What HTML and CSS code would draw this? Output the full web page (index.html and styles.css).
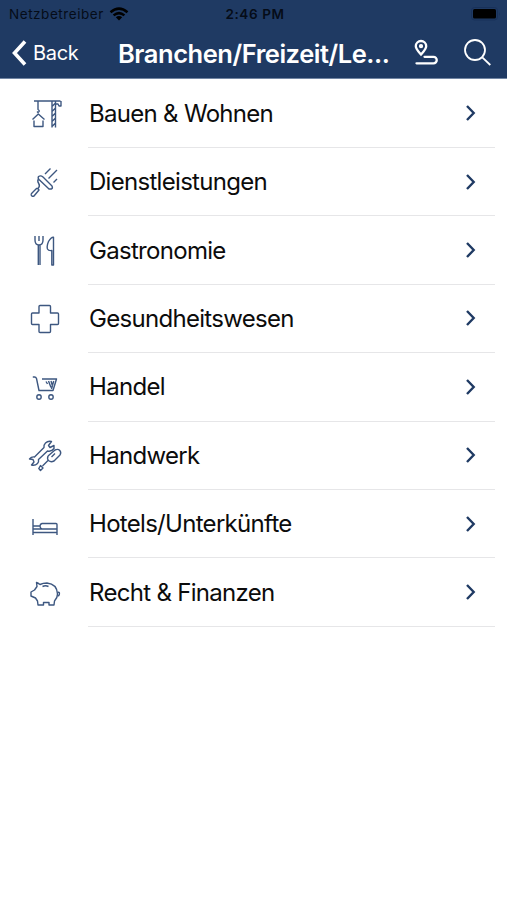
FILE: index.html
```html
<!DOCTYPE html>
<html lang="de">
<head>
    <meta charset="utf-8">
    <title>Branchen</title>
    <link rel="stylesheet" href="styles.css">
</head>

<body>
    <header class="header">
        <div class="status">
            <div class="carrier">
                <span>Netzbetreiber</span>
                <svg width="20" height="14" viewBox="0 0 20 14">
                    <g fill="none" stroke="#000" stroke-width="2.5">
                        <path d="M1.500 5.200Q10 -2 18.500 5.200"/>
                        <path d="M4.600 8.400Q10 3.800 15.400 8.400"/>
                    </g>
                    <path d="M6.800 10.200Q10 7.800 13.200 10.200L10 13.400Z"/>
                </svg>
            </div>
            <span class="time">2:46 PM</span>
            <svg class="battery" width="30" height="14" viewBox="0 0 30 14">
                <rect x=".5" y=".5" width="26" height="12.5" rx="3" fill="none" stroke="#18315a"/>
                <rect x="2" y="2" width="23" height="9.5" rx="1.5"/>
                <path d="M28 5v4q1.5-2 0-4" fill="#18315a"/>
            </svg>
        </div>
        <nav class="navbar">
            <a class="back">
                <svg width="18" height="28" viewBox="0 0 18 28"><path d="M15 2.500L4.500 14L15 25.500"/></svg>
                <span>Back</span>
            </a>
            <h1 class="title">Branchen/Freizeit/Le...</h1>
            <svg class="route" width="26" height="28" viewBox="0 0 26 28">
                <path d="M8 15.500C5.500 12.500 2.800 9.800 2.800 7.200A5.200 5.200 0 0 1 13.200 7.200C13.200 9.800 10.500 12.500 8 15.500Z"/>
                <circle cx="8" cy="7.200" r="1"/>
                <path d="M11.500 17.800H20.500A3.200 3.200 0 0 1 20.500 24.300H3.500"/>
            </svg>
            <svg class="search" width="30" height="30" viewBox="0 0 30 30">
                <circle cx="12" cy="12" r="10"/>
                <path d="M19.300 19.300L27.300 27"/>
            </svg>
        </nav>
    </header>

    <ul class="list">
        <li class="row">
            <svg class="icon" viewBox="0 0 60 60">
                <path d="M14 17H40.500M32 17V43.500M35.500 17V43.500M32 22.500L35.500 19M32 27.500L35.500 24M32 32.500L35.500 29M32 37.500L35.500 34M32 42.500L35.500 39M36 20H38L39 22L41 22V17"/>
                <path d="M18 17V25.500Q20.500 27 18 28.500L17 27.500M12.500 35.500L18.300 30L24.500 35.500M14 36.500V42.500H23V36.500"/>
            </svg>
            <div class="cell"><span>Bauen &amp; Wohnen</span><svg class="chevron" viewBox="0 0 12 20"><path d="M2 3L8.700 10L2 17"/></svg></div>
        </li>
        <li class="row">
            <svg class="icon" viewBox="0 0 60 60">
                <path d="M18.500 24.500Q20.800 23 23 25L32 34Q33 36 31.500 37H29L19 27.500Q17.500 26 18.500 24.500Z"/>
                <path d="M18.500 27Q17 29 18.700 31.500T18 36.500M17.800 36.500L19 38L14 44Q12 45 11.200 43Q11 42 12 41L16.500 36.500Z"/>
                <path d="M25 22L30.500 16.500M28.500 26.500L37 18M33.500 30.500L37 27"/>
            </svg>
            <div class="cell"><span>Dienstleistungen</span><svg class="chevron" viewBox="0 0 12 20"><path d="M2 3L8.700 10L2 17"/></svg></div>
        </li>
        <li class="row">
            <svg class="icon" viewBox="0 0 60 60">
                <path d="M15 15V19Q15 24 19 24T23 19V15M19 15V20M18.300 24V44M20 24V44"/>
                <path d="M33.500 44V16.200Q31 16 28.500 20.500Q26.500 25 27.500 28Q28.500 30 31.800 29.500V44Z"/>
            </svg>
            <div class="cell"><span>Gastronomie</span><svg class="chevron" viewBox="0 0 12 20"><path d="M2 3L8.700 10L2 17"/></svg></div>
        </li>
        <li class="row">
            <svg class="icon" viewBox="0 0 60 60">
                <path d="M20 16.500H29.500Q30.500 16.500 30.500 17.500V24H37.500Q38.500 24 38.500 25V34.500Q38.500 35.500 37.500 35.500H30.500V42.500Q30.500 43.500 29.500 43.500H20Q19 43.500 19 42.500V35.500H12.500Q11.500 35.500 11.500 34.500V25Q11.500 24 12.500 24H19V17.500Q19 16.500 20 16.500Z"/>
            </svg>
            <div class="cell"><span>Gesundheitswesen</span><svg class="chevron" viewBox="0 0 12 20"><path d="M2 3L8.700 10L2 17"/></svg></div>
        </li>
        <li class="row">
            <svg class="icon" viewBox="0 0 60 60">
                <path d="M12.800 20H14.500Q16 20 16.500 21.500L19 33.500H33L36.500 22H22"/>
                <path d="M26 24.500L27.500 27M28.500 24L31 30.500M31 24L32.500 29M33.700 24L31.500 32"/>
                <circle cx="19" cy="40" r="2.200"/>
                <circle cx="31" cy="40" r="2.200"/>
            </svg>
            <div class="cell"><span>Handel</span><svg class="chevron" viewBox="0 0 12 20"><path d="M2 3L8.700 10L2 17"/></svg></div>
        </li>
        <li class="row">
            <svg class="icon" viewBox="0 0 60 60">
                <path d="M31.500 15.500Q28 14.500 25.500 17Q23.500 19 24 21.500L14.500 31Q11.500 30.500 9.500 33L13 33.500L14 36L11.500 39Q15 40 17.500 37.500Q19 36 18.500 33.500L27.500 25Q31.500 26 34 22.500V19.500L30 21.500L28.500 19.500Z"/>
                <path d="M28 30L35 24Q38 22.500 39.800 24.500Q41.500 26.500 40 29L34 35Q31 36.500 28.800 34.800Q26.800 33 28 30M28 34.500L22.500 40M20.500 39.500L23 42L20.500 44.500L18.800 42.500ZM31.500 31L35 27.500"/>
            </svg>
            <div class="cell"><span>Handwerk</span><svg class="chevron" viewBox="0 0 12 20"><path d="M2 3L8.700 10L2 17"/></svg></div>
        </li>
        <li class="row">
            <svg class="icon" viewBox="0 0 60 60">
                <path d="M13 25V41M13 35H37M13 38.500H37M37 41V30.500Q37 29.500 36 29.500H22Q20 30 20 32Q20 34.500 22 35M13 32H20"/>
            </svg>
            <div class="cell"><span>Hotels/Unterkünfte</span><svg class="chevron" viewBox="0 0 12 20"><path d="M2 3L8.700 10L2 17"/></svg></div>
        </li>
        <li class="row">
            <svg class="icon" viewBox="0 0 60 60">
                <path d="M16.500 19.500Q18 20 20 21.500Q23 20 27 20Q37 21 37.500 31Q37.500 35 34.500 38L34 42H29V39.500H23.500V42H18L17.500 38L15.500 35L11 33V29L14.500 27L17 23.500Z"/>
                <path d="M22.500 23.500Q25.500 22 28.500 23.500M37.500 29.500Q40 28.500 39.300 31.500Q39 33 37.500 33"/>
            </svg>
            <div class="cell"><span>Recht &amp; Finanzen</span><svg class="chevron" viewBox="0 0 12 20"><path d="M2 3L8.700 10L2 17"/></svg></div>
        </li>
    </ul>
</body>

</html>
```
FILE: styles.css
```css
*{
    box-sizing: border-box;
}
body{
    margin: 0;
    background-color: #fff;
    font-family: Inter, "Liberation Sans", sans-serif;
    color: #0c0c0c;
}
.header{
    height: 79px;
    background-color: #1f3a63;
    border-bottom: 1px solid #7185a3;
}
.status{
    display: grid;
    grid-template-columns: 1fr auto 1fr;
    align-items: center;
    height: 27px;
    padding: 0 6px 0 9px;
    font-size: 13.5px;
    color: #050c18;
}
.carrier{
    display: flex;
    align-items: center;
    gap: 5px;
    letter-spacing: 0.55px;
}
.time{
    font-weight: 600;
    letter-spacing: 0.6px;
}
.battery{
    justify-self: end;
}
.navbar{
    display: flex;
    align-items: center;
    height: 51px;
    padding: 1px 0 0 10px;
    color: #fff;
}
.navbar svg{
    flex: none;
    fill: none;
    stroke: #fff;
}
.back{
    display: flex;
    align-items: center;
    gap: 5px;
    width: 108px;
    font-size: 20px;
    letter-spacing: -0.3px;
}
.back svg{
    stroke-width: 3.6;
}
.title{
    width: 295px;
    margin: 0;
    font-size: 25.5px;
    font-weight: 600;
    letter-spacing: -0.45px;
    white-space: nowrap;
}
.route{
    stroke-width: 2.3;
    stroke-linecap: round;
}
.search{
    margin-left: 24px;
    stroke-width: 1.8;
}
.list{
    margin: 0;
    padding: 0.6px 0 0;
    list-style: none;
}
.row{
    display: flex;
    align-items: center;
    height: 68.4px;
    padding: 0 12px 0 20px;
}
.icon{
    width: 60px;
    height: 60px;
    margin-right: 8px;
    fill: none;
    stroke: #3d5780;
    stroke-width: 1.4;
    stroke-linejoin: round;
}
.cell{
    flex: 1;
    display: flex;
    align-items: center;
    justify-content: space-between;
    height: 100%;
    padding: 0 18px 0 1px;
    border-bottom: 1px solid #e6e6e8;
    font-size: 24px;
    letter-spacing: -0.7px;
}
.chevron{
    width: 12px;
    height: 20px;
    fill: none;
    stroke: #1f3a63;
    stroke-width: 2.4;
}
```
